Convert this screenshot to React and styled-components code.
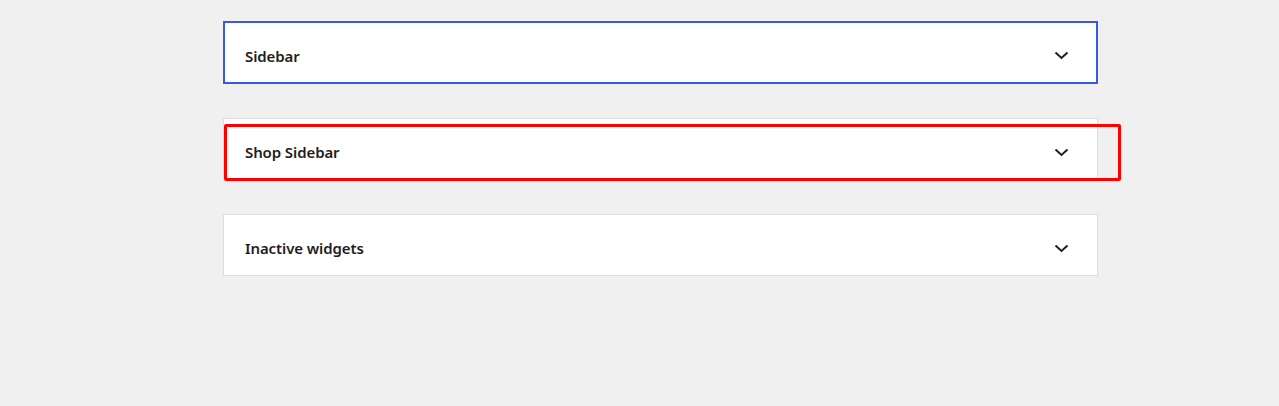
import React from "react";
import styled, { createGlobalStyle } from "styled-components";

const Global = createGlobalStyle`
  html, body { margin: 0; padding: 0; background: #f0f0f0; }
  body { font-family: "Noto Sans", "Open Sans", Arial, sans-serif; }
`;

const Page = styled.div`
  min-height: 406px;
  background: #f0f0f0;
  padding: 21px 0 0 223px;
  box-sizing: border-box;
`;

const List = styled.div`
  width: 875px;
  display: flex;
  flex-direction: column;
  gap: 34px;
`;

const Wrap = styled.div`
  position: relative;
`;

const Card = styled.div`
  height: ${(p) => (p.$focused ? "63px" : "62px")};
  box-sizing: border-box;
  background: #fff;
  border: 1px solid #dcdcde;
  outline: ${(p) => (p.$focused ? "2px solid #3858e9" : "none")};
  outline-offset: -2px;
  display: flex;
  align-items: center;
  justify-content: space-between;
  padding: 6px 28px 0 21px;
`;

const Title = styled.h2`
  margin: 0;
  font-size: 15px;
  font-weight: 600;
  color: #1e1e1e;
  letter-spacing: -0.1px;
`;

const Chevron = styled.svg`
  width: 15px;
  height: 9px;
  flex: none;
`;

const Highlight = styled.div`
  position: absolute;
  left: 1px;
  top: 6px;
  width: 897px;
  height: 57px;
  box-sizing: border-box;
  border: 3px solid #ff0000;
  border-radius: 2px;
  pointer-events: none;
`;

const Arrow = () => (
  <Chevron viewBox="0 0 15 9">
    <polyline points="1.5,1.5 7.5,7 13.5,1.5" fill="none" stroke="#1e1e1e" strokeWidth="2" />
  </Chevron>
);

export default function App() {
  return (
    <>
      <Global />
      <Page>
        <List>
          <Wrap>
            <Card $focused>
              <Title>Sidebar</Title>
              <Arrow />
            </Card>
          </Wrap>
          <Wrap>
            <Card>
              <Title>Shop Sidebar</Title>
              <Arrow />
            </Card>
            <Highlight />
          </Wrap>
          <Wrap>
            <Card>
              <Title>Inactive widgets</Title>
              <Arrow />
            </Card>
          </Wrap>
        </List>
      </Page>
    </>
  );
}
